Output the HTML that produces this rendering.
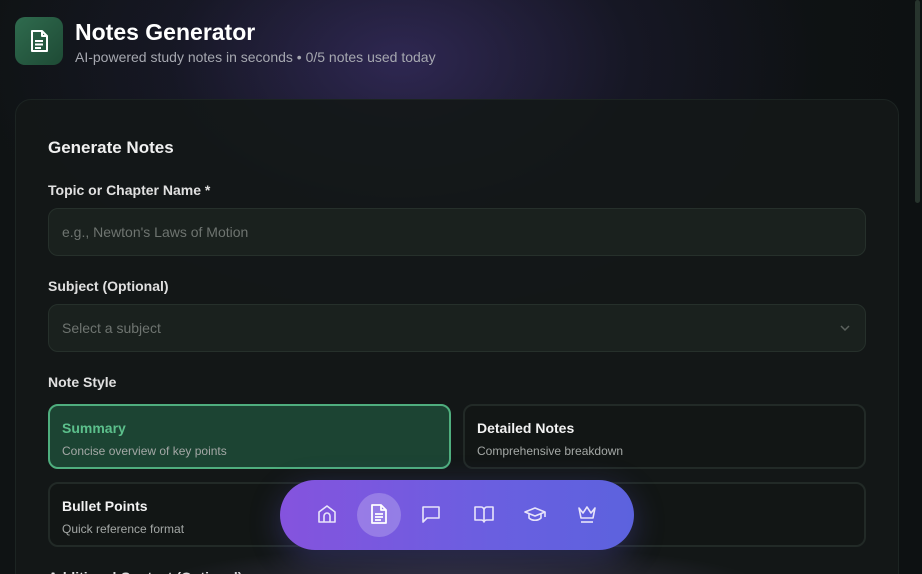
<!DOCTYPE html>
<html style="width:922px;height:574px;overflow:hidden"><head><style>
*{margin:0;padding:0;box-sizing:border-box}
body{width:922px;height:574px;overflow:hidden;background:#0e1213;font-family:"Liberation Sans",sans-serif;position:relative}
.bg{position:absolute;inset:0;background:radial-gradient(ellipse 420px 260px at 400px 60px,rgba(70,55,130,.55),rgba(40,35,80,.25) 55%,transparent 100%),linear-gradient(90deg,#0f1314,#121418 50%,#0d1112)}
.sb{position:absolute;right:2px;top:0;width:5px;height:203px;background:#27342d;border-radius:3px}
.logo{position:absolute;left:15px;top:17px;width:48px;height:48px;border-radius:10px;background:linear-gradient(135deg,#2f6b4e,#1e4a35)}
h1{position:absolute;left:75px;top:19px;color:#fff;font-size:23px;font-weight:bold}
.sub{position:absolute;left:75px;top:49px;color:#a6a8b0;font-size:14px}
.card{position:absolute;left:15px;top:99px;width:884px;height:500px;border-radius:16px;background:rgba(20,24,24,.92);border:1px solid #1c2422}
.t{position:absolute;color:#f0f0f0;font-weight:bold}
.inp{position:absolute;left:48px;width:818px;height:48px;border-radius:10px;background:#1a211e;border:1px solid #26302b;color:#6e7470;font-size:14px;padding:15px 13px}
.opt{position:absolute;height:65px;border-radius:10px;border:2px solid #222a27;background:#121615;padding:14px 12px}
.opt b{display:block;color:#f2f2f2;font-size:14px;margin-bottom:6px}
.opt span{color:#a4a8a6;font-size:12px}
.nav{position:absolute;left:280px;top:480px;width:354px;height:70px;border-radius:35px;background:linear-gradient(90deg,#8553de,#6a5fe0 60%,#5c62de);box-shadow:0 8px 30px rgba(90,80,200,.35)}
.nav svg{position:absolute;top:23px}
.act{position:absolute;left:77px;top:13px;width:44px;height:44px;border-radius:50%;background:rgba(255,255,255,.22)}
.glow{position:absolute;left:0;top:545px;width:922px;height:40px;background:radial-gradient(ellipse 300px 40px at 460px 40px,rgba(90,80,120,.5),transparent)}
</style></head><body>
<div class="bg"></div>
<div class="sb"></div>
<div class="logo"><svg width="48" height="48" viewBox="0 0 48 48" fill="none" stroke="#fff" stroke-width="2" stroke-linejoin="round"><path d="M17 14h10l5 5v15h-15z"/><path d="M27 14v5h5M20 24h8M20 27.5h8M20 31h6"/></svg></div>
<h1>Notes Generator</h1>
<div class="sub">AI-powered study notes in seconds • 0/5 notes used today</div>
<div class="card"></div>
<div class="t" style="left:48px;top:138px;font-size:17px">Generate Notes</div>
<div class="t" style="left:48px;top:182px;font-size:14px;color:#e0e0e0">Topic or Chapter Name *</div>
<div class="inp" style="top:208px">e.g., Newton's Laws of Motion</div>
<div class="t" style="left:48px;top:278px;font-size:14px;color:#e0e0e0">Subject (Optional)</div>
<div class="inp" style="top:304px">Select a subject<svg style="position:absolute;right:14px;top:19px" width="12" height="8" viewBox="0 0 12 8" fill="none" stroke="#5c625e" stroke-width="1.5"><path d="M2 2l4 4 4-4"/></svg></div>
<div class="t" style="left:48px;top:374px;font-size:14px;color:#e0e0e0">Note Style</div>
<div class="opt" style="left:48px;top:404px;width:403px;background:#1c4433;border-color:#4fae7e"><b style="color:#5cc08c">Summary</b><span>Concise overview of key points</span></div>
<div class="opt" style="left:463px;top:404px;width:403px"><b>Detailed Notes</b><span>Comprehensive breakdown</span></div>
<div class="opt" style="left:48px;top:482px;width:403px"><b>Bullet Points</b><span>Quick reference format</span></div>
<div class="opt" style="left:463px;top:482px;width:403px"></div>
<div class="t" style="left:48px;top:569px;font-size:14px;color:#ddd">Additional Context (Optional)</div>
<div class="glow"></div>
<div class="nav">
<div class="act"></div>
<svg style="left:37px" width="20" height="22" viewBox="0 0 20 22" fill="none" stroke="#e8e4fa" stroke-width="1.6" stroke-linejoin="round"><path d="M2 9l8-6 8 6v10H2z"/><path d="M7 19v-6a3 3 0 016 0v6"/></svg>
<svg style="left:89px" width="20" height="22" viewBox="0 0 20 22" fill="none" stroke="#fff" stroke-width="1.8" stroke-linejoin="round"><path d="M3 2h9l5 5v13H3z"/><path d="M12 2v5h5M6 11h8M6 14h8M6 17h6"/></svg>
<svg style="left:141px" width="20" height="22" viewBox="0 0 20 22" fill="none" stroke="#e8e4fa" stroke-width="1.6" stroke-linejoin="round"><path d="M2 4h16v11H6l-4 4z"/></svg>
<svg style="left:193px" width="22" height="22" viewBox="0 0 22 22" fill="none" stroke="#e8e4fa" stroke-width="1.6" stroke-linejoin="round"><path d="M2 4h6a3 3 0 013 3v12a3 3 0 00-3-2H2zM20 4h-6a3 3 0 00-3 3v12a3 3 0 013-2h6z"/></svg>
<svg style="left:244px" width="22" height="22" viewBox="0 0 22 22" fill="none" stroke="#e8e4fa" stroke-width="1.6" stroke-linejoin="round"><path d="M1 9l10-4 10 4-10 4z"/><path d="M5 11v4c3 3 9 3 12 0v-4M21 9v5"/></svg>
<svg style="left:296px" width="22" height="22" viewBox="0 0 22 22" fill="none" stroke="#e8e4fa" stroke-width="1.6" stroke-linejoin="round"><path d="M3 5l4 5 4-6 4 6 4-5-2 10H5z"/><path d="M5 19h12"/></svg>
</div>
</body></html>
